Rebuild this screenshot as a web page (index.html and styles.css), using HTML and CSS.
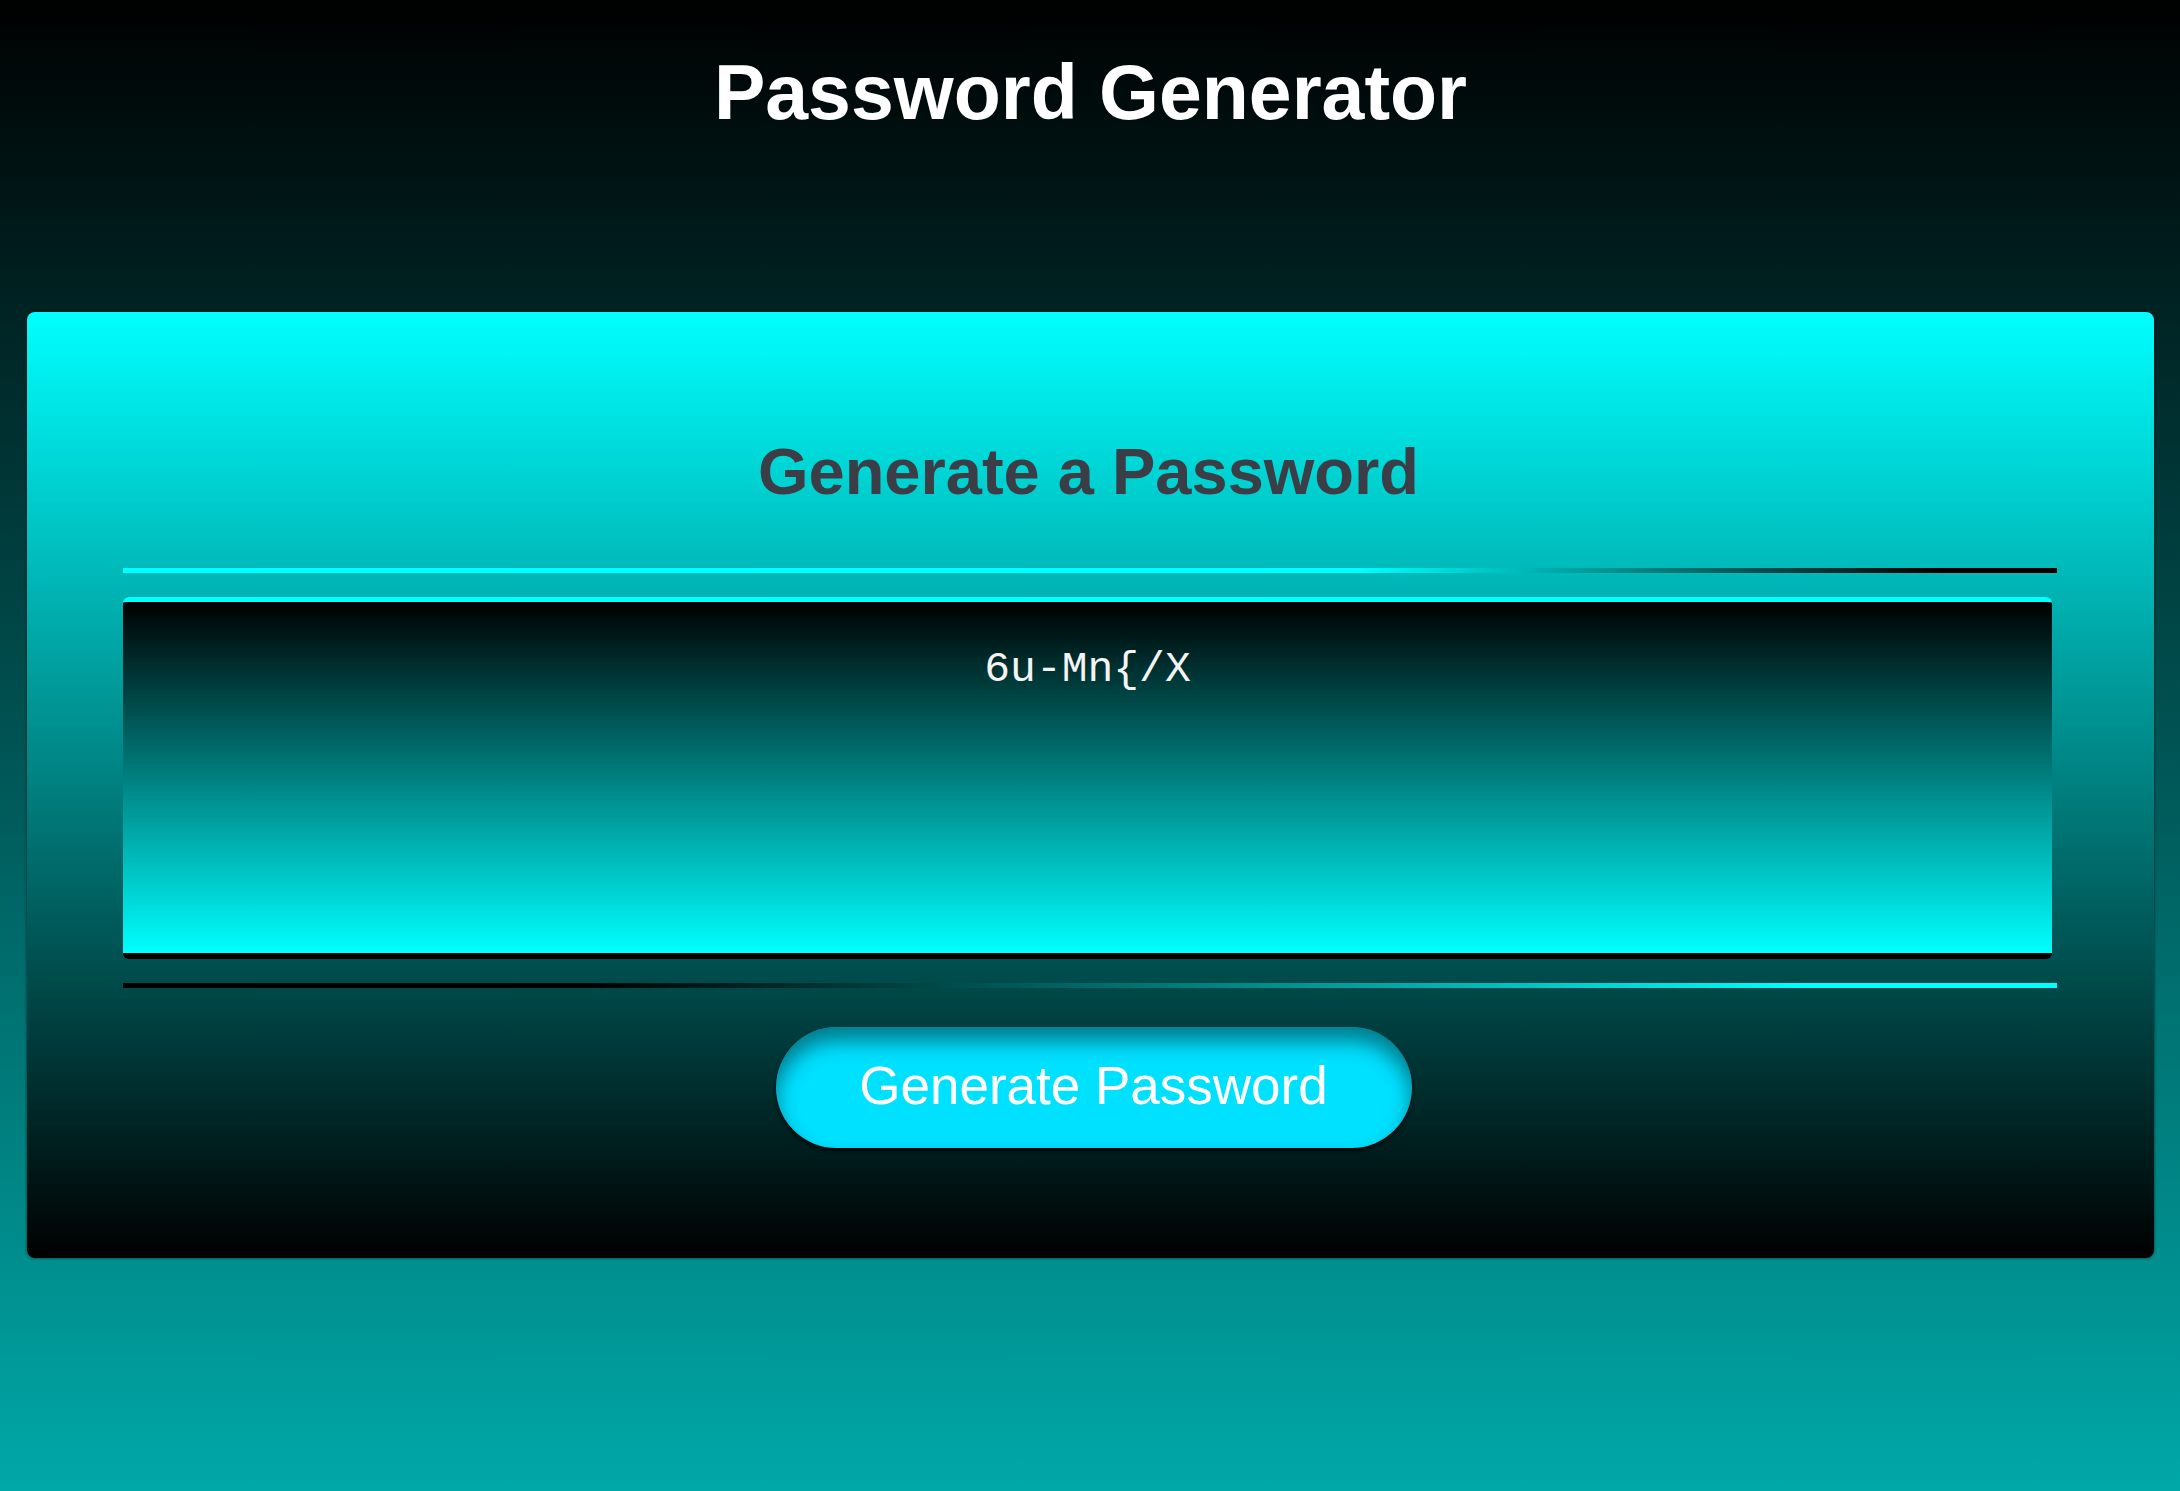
FILE: index.html
```html
<!DOCTYPE html>
<html lang="en">
<head>
<meta charset="utf-8">
<title>Password Generator</title>
<link rel="stylesheet" href="styles.css">
</head>
<body>
  <header class="page-header">
    <h1 class="page-title">Password Generator</h1>
  </header>
  <main class="card">
    <h2 class="card-title">Generate a Password</h2>
    <div class="rule rule-top"></div>
    <textarea class="password-box" readonly aria-label="Generated Password">6u-Mn{/X</textarea>
    <div class="rule rule-bottom"></div>
    <div class="actions">
      <button class="generate-btn" type="button">Generate Password</button>
    </div>
  </main>
</body>
</html>
```
FILE: styles.css
```css
html {
  height: 100%;
}

body {
  margin: 0;
  min-height: 100%;
  padding: 0 26px 0 27px;
  box-sizing: border-box;
  background: linear-gradient(to bottom, #000000 0%, #00a8a8 100%);
  font-family: "Liberation Sans", Arial, sans-serif;
}

.page-header {
  display: flex;
  justify-content: center;
}

.page-title {
  margin: 48px 0 0;
  font-size: 77px;
  line-height: 88px;
  font-weight: 700;
  color: #ffffff;
}

.card {
  margin-top: 176px;
  padding: 123px 97px 110px 96px;
  border-radius: 8px;
  background: linear-gradient(to bottom, #00ffff 0%, #000000 100%);
  box-shadow: 0 0 3px rgba(0, 0, 0, 0.7);
  display: flex;
  flex-direction: column;
}

.card-title {
  margin: 0;
  text-align: center;
  font-size: 65px;
  line-height: 74px;
  font-weight: 700;
  color: #3b3e46;
  padding-right: 3px;
}

.rule {
  height: 5px;
}

.rule-top {
  margin-top: 59px;
  background: linear-gradient(to right, #00ffff 64%, #000000 94%);
}

.rule-bottom {
  margin-top: 24px;
  background: linear-gradient(to right, #000000 24%, #00ffff 87%);
}

.password-box {
  display: block;
  margin-top: 24px;
  width: calc(100% - 5px);
  height: 362px;
  box-sizing: border-box;
  padding: 44px 20px 0;
  border: none;
  border-top: 5px solid #00ffff;
  border-bottom: 6px solid #000000;
  border-radius: 6px;
  background: linear-gradient(to bottom, #000000 0%, #00ffff 100%);
  color: #f4f4f4;
  font-family: "Liberation Mono", "DejaVu Sans Mono", monospace;
  font-size: 43px;
  line-height: 48px;
  text-align: center;
  resize: none;
  outline: none;
  overflow: hidden;
}

.actions {
  margin-top: 39px;
  display: flex;
  justify-content: center;
  padding-left: 7px;
}

.generate-btn {
  width: 636px;
  height: 121px;
  border: none;
  border-radius: 61px;
  background: #00e0ff;
  color: #ffffff;
  font-family: "Liberation Sans", Arial, sans-serif;
  font-size: 53px;
  line-height: 1;
  padding: 0 0 4px;
  cursor: pointer;
  box-shadow: inset 0 14px 20px rgba(0, 0, 0, 0.45), 0 3px 4px rgba(0, 0, 0, 0.75);
}
```
